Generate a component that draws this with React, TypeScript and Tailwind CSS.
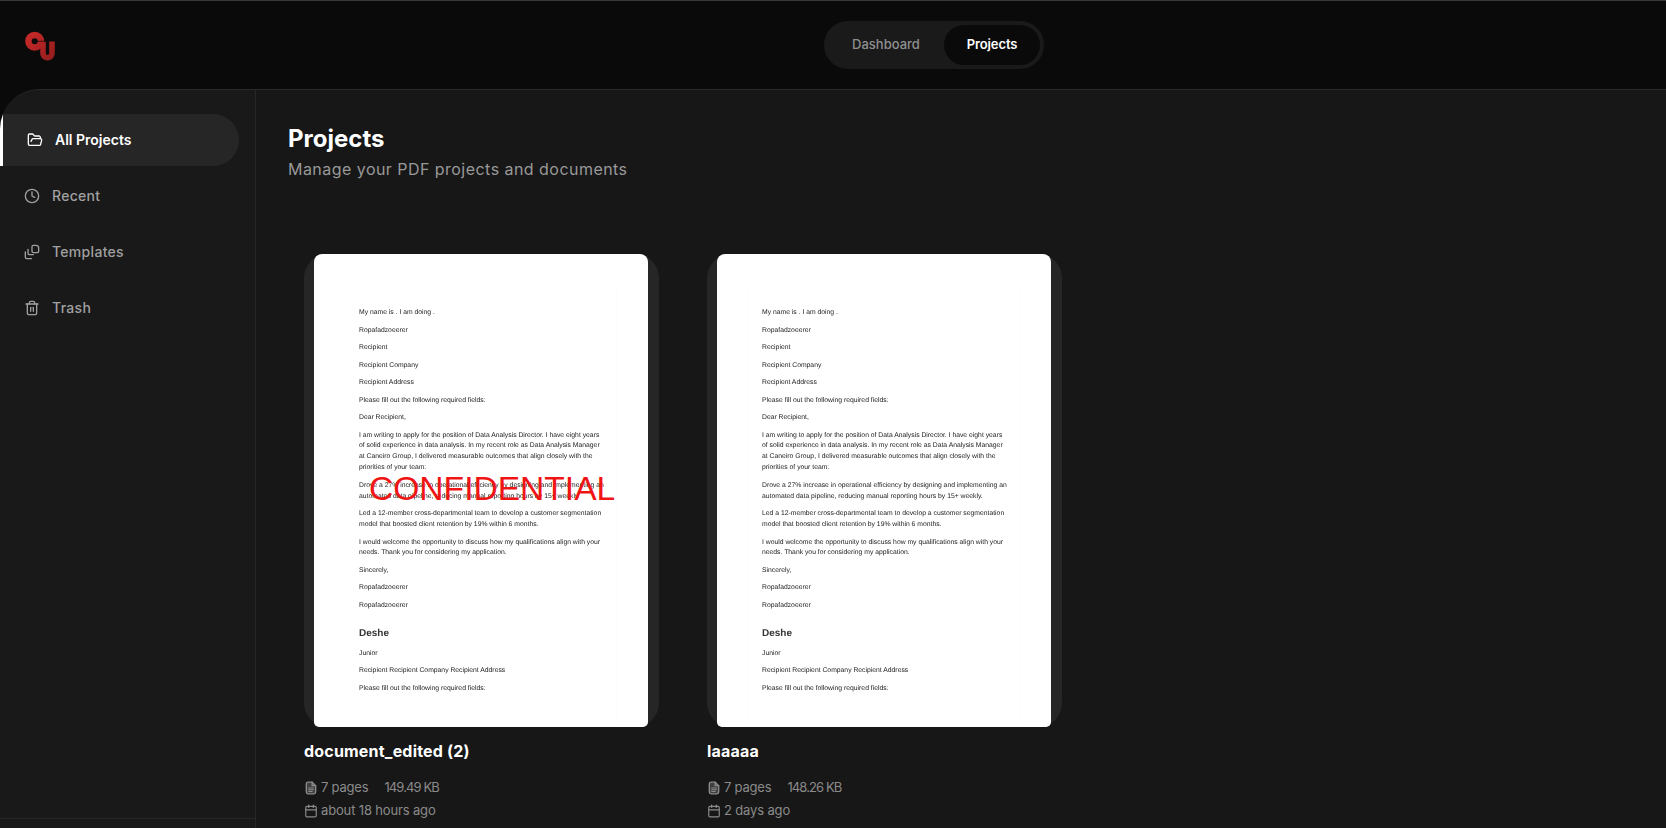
import { Calendar, Clock, FolderOpen, Trash2 } from "lucide-react";

const font = { fontFamily: '"Inter", "Liberation Sans", sans-serif' };

function Logo() {
  return (
    <svg width="32" height="32" viewBox="0 0 32 32" fill="none">
      <defs>
        <linearGradient id="lg" x1="0" y1="0" x2="32" y2="30" gradientUnits="userSpaceOnUse">
          <stop offset="0" stopColor="#cf2b2b" />
          <stop offset="1" stopColor="#8f1c1c" />
        </linearGradient>
      </defs>
      <circle cx="10.7" cy="10.3" r="9.5" fill="url(#lg)" />
      <path d="M19 10.5V22.25a4.5 4.5 0 0 0 9 0V10.5" stroke="url(#lg)" strokeWidth="5.6" />
      <circle cx="10.7" cy="10.3" r="3" fill="#0a0a0a" />
      <path d="M12 10.3H22" stroke="#0a0a0a" strokeWidth="0.7" />
    </svg>
  );
}

function TemplatesIcon() {
  return (
    <svg width="16" height="16" viewBox="0 0 24 24" fill="none" stroke="currentColor" strokeWidth="2" strokeLinecap="round" strokeLinejoin="round">
      <path d="M14 2h4a4 4 0 0 1 4 4v5a2 2 0 0 1-2 2h-6a2 2 0 0 1-2-2V4a2 2 0 0 1 2-2z" />
      <path d="M6 8v6a2 2 0 0 0 2 2h6" />
      <path d="M2 12v8a2 2 0 0 0 2 2h7" />
    </svg>
  );
}

function PageIcon() {
  return (
    <svg width="14" height="14" viewBox="0 0 24 24" fill="none" stroke="currentColor" strokeWidth="2.4" strokeLinecap="round" strokeLinejoin="round">
      <path d="M14 2H7a3 3 0 0 0-3 3v14a3 3 0 0 0 3 3h10a3 3 0 0 0 3-3V8z" fill="currentColor" fillOpacity="0.35" />
      <path d="M14 2v6h6" />
      <path d="M8 12h8M8 15h8M8 18h6" strokeWidth="2" />
    </svg>
  );
}

const navItems = [
  { label: "Recent", icon: <Clock size={16} /> },
  { label: "Templates", icon: <TemplatesIcon /> },
  { label: "Trash", icon: <Trash2 size={16} /> },
];

const docBlocks: { lines: string[]; heading?: boolean }[] = [
  { lines: ["My name is . I am doing ."] },
  { lines: ["Ropafadzoeerer"] },
  { lines: ["Recipient"] },
  { lines: ["Recipient Company"] },
  { lines: ["Recipient Address"] },
  { lines: ["Please fill out the following required fields:"] },
  { lines: ["Dear Recipient,"] },
  {
    lines: [
      "I am writing to apply for the position of Data Analysis Director. I have eight years",
      "of solid experience in data analysis. In my recent role as Data Analysis Manager",
      "at Caneiro Group, I delivered measurable outcomes that align closely with the",
      "priorities of your team:",
    ],
  },
  {
    lines: [
      "Drove a 27% increase in operational efficiency by designing and implementing an",
      "automated data pipeline, reducing manual reporting hours by 15+ weekly.",
    ],
  },
  {
    lines: [
      "Led a 12-member cross-departmental team to develop a customer segmentation",
      "model that boosted client retention by 19% within 6 months.",
    ],
  },
  {
    lines: [
      "I would welcome the opportunity to discuss how my qualifications align with your",
      "needs. Thank you for considering my application.",
    ],
  },
  { lines: ["Sincerely,"] },
  { lines: ["Ropafadzoeerer"] },
  { lines: ["Ropafadzoeerer"] },
  { lines: ["Deshe"], heading: true },
  { lines: ["Junior"] },
  { lines: ["Recipient Recipient Company Recipient Address"] },
  { lines: ["Please fill out the following required fields:"] },
];

function DocPreview({ stamped }: { stamped?: boolean }) {
  return (
    <div className="relative h-full w-[334px] overflow-hidden rounded-t-[8px] rounded-b-[5px] bg-white pl-[31px] pt-[32px]">
      <div
        className="h-[441px] w-[272px] border border-[#fdfdfd] pl-[13px] pt-[21px] text-[#222] blur-[0.3px] [text-rendering:geometricPrecision]"
        style={{ fontFamily: '"Liberation Sans", Arial, sans-serif' }}
      >
        {docBlocks.map((b, i) =>
          b.heading ? (
            <p key={i} className="mb-[8px] mt-[15px] text-[10px] font-bold leading-[14px] text-[#333]">
              {b.lines[0]}
            </p>
          ) : (
            <div key={i} className="mb-[6.6px] text-[6.8px] leading-[10.9px]">
              {b.lines.map((l) => (
                <p key={l} className="whitespace-nowrap">
                  {l}
                </p>
              ))}
            </div>
          ),
        )}
      </div>
      {stamped && (
        <div
          className="absolute left-[55px] top-[210px] text-[33.6px] leading-[50px] whitespace-nowrap text-[#f01414]"
          style={{ fontFamily: '"Liberation Sans", Arial, sans-serif' }}
        >
          CONFIDENTIAL
        </div>
      )}
    </div>
  );
}

function ProjectCard({ name, size, date, stamped }: { name: string; size: string; date: string; stamped?: boolean }) {
  return (
    <div className="w-[355px]">
      <div className="h-[473px] rounded-[24px] bg-[#262626] pl-[10px]">
        <DocPreview stamped={stamped} />
      </div>
      <h3 className="mt-[12px] text-[16px] font-bold leading-[24px] tracking-[0.2px] text-white">{name}</h3>
      <div className="mt-[15px] flex h-[20px] items-center text-[13px] text-[#8a8a8a]">
        <PageIcon />
        <span className="ml-[3px] tracking-[-0.2px]">7 pages</span>
        <span className="ml-[16px] tracking-[-0.9px]">{size}</span>
      </div>
      <div className="mt-[3px] flex h-[20px] items-center text-[13px] text-[#8a8a8a]">
        <Calendar size={14} className="mr-[3px]" />
        <span className="tracking-[-0.15px]">{date}</span>
      </div>
    </div>
  );
}

export default function App() {
  return (
    <div className="flex h-screen flex-col overflow-hidden bg-[#0a0a0a]" style={font}>
      <header className="relative flex h-[89px] shrink-0 items-center justify-center border-t border-[#3a3a3a]">
        <div className="absolute left-[24px] top-[30px]">
          <Logo />
        </div>
        <nav className="ml-[202px] flex h-[48px] w-[220px] items-center rounded-full bg-[#1a1a1a] p-[4px] text-[13px] font-medium">
          <a className="flex-1 text-center text-[#8f8f8f]">Dashboard</a>
          <a className="flex h-[40px] w-[96px] items-center justify-center rounded-full bg-[#0a0a0a] font-semibold tracking-[-0.1px] text-white">
            Projects
          </a>
        </nav>
      </header>

      <div className="flex min-h-0 flex-1 overflow-hidden rounded-tl-[40px] border-t border-[#2a2a2a] bg-[#171717]">
        <aside className="flex w-[256px] shrink-0 flex-col border-r border-[#262626] bg-[#191919] pr-[16px]">
          <div className="flex-1 pt-[24px]">
            <a className="flex h-[52px] items-center rounded-r-[26px] border-l-[3px] border-white bg-[#262626] pl-[24px] text-[14px] font-semibold text-white">
              <FolderOpen size={16} className="mr-[12px]" />
              <span className="mb-[1px]">All Projects</span>
            </a>
            {navItems.map((it) => (
              <a key={it.label} className="mt-[4px] flex h-[52px] items-center pl-[24px] text-[14px] font-medium tracking-[0.3px] text-[#a0a0a0]">
                <span className="mr-[12px]">{it.icon}</span>
                <span className="mb-[2px]">{it.label}</span>
              </a>
            ))}
          </div>
          <div className="-mr-[16px] h-[10px] border-t border-[#262626]" />
        </aside>

        <main className="flex-1 px-[32px] pt-[33px]">
          <h1 className="text-[24px] font-bold leading-[32px] text-white">Projects</h1>
          <p className="mt-[2px] text-[16px] leading-[24px] tracking-[0.46px] text-[#999]">Manage your PDF projects and documents</p>
          <div className="mt-[73px] flex gap-[48px] pl-[16px]">
            <ProjectCard name="document_edited (2)" size="149.49 KB" date="about 18 hours ago" stamped />
            <ProjectCard name="laaaaa" size="148.26 KB" date="2 days ago" />
          </div>
        </main>
      </div>
    </div>
  );
}
